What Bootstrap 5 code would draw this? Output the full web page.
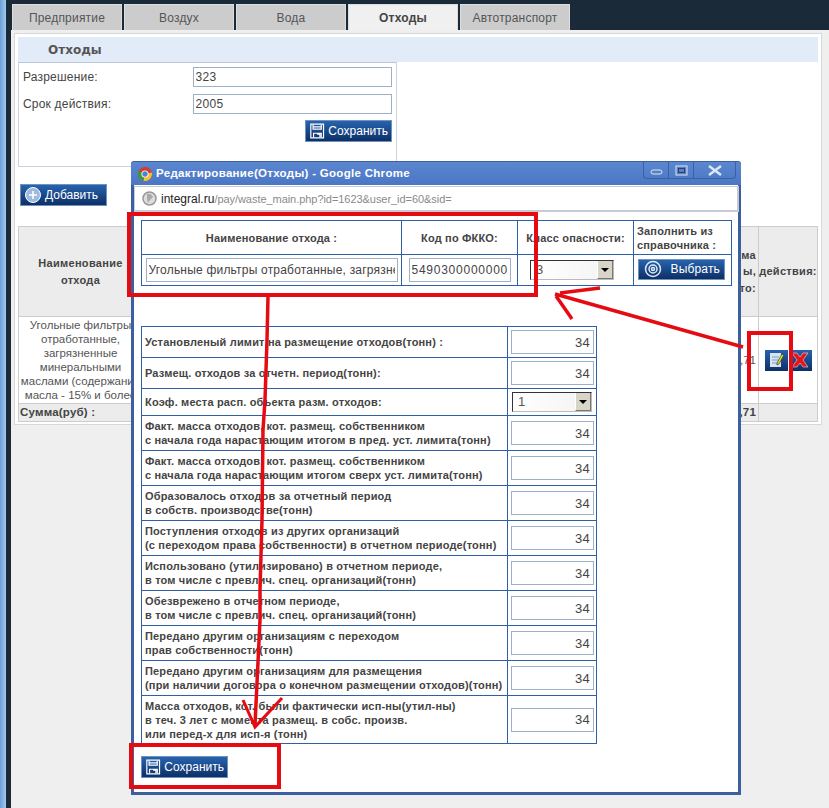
<!DOCTYPE html>
<html lang="ru"><head><meta charset="utf-8">
<title>Отходы</title>
<link href="https://cdn.jsdelivr.net/npm/bootstrap@5.3.0/dist/css/bootstrap.min.css" rel="stylesheet">
<style>
html,body{height:100%;}
body{margin:0;background:#efefef;font-family:"Liberation Sans",Arial,sans-serif;font-size:12px;color:#444;overflow:hidden;width:829px;height:808px;position:relative;}
.stripblue{width:6px;background:linear-gradient(90deg,#6a9fd8,#a5c9ee);flex:none;}
.stripdark{width:5px;background:#1a2a38;flex:none;}
.maincol{flex:1;min-width:0;}
.topbar{height:30px;background:#1a2a38;padding-top:4px;display:flex;gap:2px;margin-left:-5px;padding-left:6px;}
.tabx{height:26px;width:110px;background:#ccc;color:#555;display:flex;align-items:center;justify-content:center;font-size:12px;letter-spacing:.2px;border:1px solid #ddd;border-bottom:0;}
.tabx.on{background:#f0f0f0;font-weight:bold;color:#444;}
.panelx{margin:3px 7px 0 3px;background:#fff;border:1px solid #d8d8d8;height:392px;padding:3px;position:relative;}
.headx{height:25px;background:#e2ecf8;color:#555;font-weight:bold;padding:4px 0 0 30px;font-family:"DejaVu Sans",sans-serif;font-size:12px;}
.formbox{width:379px;height:105px;border:1px solid #ccd3de;border-top-color:#bcc6d6;padding:0 4px;}
.rowx{display:flex;align-items:center;height:27px;font-size:12px;}
.rowx label{width:170px;letter-spacing:.2px;}
.txt{border:1px solid #9db0c6;height:20px;padding:0 2px;font:12px "Liberation Sans",sans-serif;color:#444;width:200px;background:#fff;outline:0;letter-spacing:.3px;}
.txt.rt{text-align:right;padding-right:3px;font-size:13px;height:24px;width:83px;}
.bluebtn{display:inline-flex;align-items:center;background:linear-gradient(#2763ae,#0d2f66);color:#fff;border:1px solid #6f93bf;font-size:12px;height:22px;width:87px;padding:0 3px;gap:3px;border-radius:0;line-height:1;font-weight:normal;font-family:"Liberation Sans",sans-serif;}
.saveright{display:flex;justify-content:flex-end;margin-top:3px;}
.addwrap{margin:17px 0 0 2px;height:22px;}
.gridx{width:100%;margin-top:20px;border-collapse:collapse;table-layout:fixed;font-size:12px;}
.gridx td,.gridx th{border:1px solid #ccc;text-align:center;padding:0;}
.gridx th{background:#ececec;color:#444;font-size:11px;font-weight:bold;letter-spacing:.3px;}
.gridx tr.hd{height:90px;}
.gridx tr.bd{height:87px;line-height:14px;color:#555;font-size:11.5px;white-space:nowrap;}
.gridx tr.ft{height:17px;}
.gridx tr.ft td{background:#ececec;font-weight:bold;font-size:11.5px;text-align:left;letter-spacing:.2px;padding-left:1px;}
.gridx tr.ft td.text-end,.gridx th.text-end,.gridx td.text-end{text-align:right;padding-right:2px;}
.actbtns{display:inline-flex;gap:1px;vertical-align:middle;}
.sqb{width:23px;height:21px;background:linear-gradient(#2763ae,#0d2f66);display:flex;align-items:center;justify-content:center;}
.winx{position:absolute;left:131px;top:161px;width:610px;height:634px;background:#fff;border-style:solid;border-width:1px 3px 3px 3px;border-color:#3c5f9f;border-radius:3px 3px 0 0;}
.wintitle{height:23px;margin:0 -3px;background:linear-gradient(#5b86d0,#4a76c4);color:#fff;font-weight:bold;font-size:11.5px;letter-spacing:.3px;display:flex;align-items:center;padding-left:6px;gap:3px;position:relative;border-radius:3px 3px 0 0;}
.winctl{position:absolute;right:5px;top:0;height:17px;display:flex;border:1px solid #3c5f9f;border-top:0;border-radius:0 0 4px 4px;}
.winctl span{display:flex;align-items:center;justify-content:center;width:25px;height:17px;border-right:1px solid #3c5f9f;}
.winctl span:last-child{border-right:0;width:41px;}
.urlbar{height:26px;background:#fff;border:1px solid #c5cad3;border-right-width:2px;border-bottom-width:2px;margin:1px -1px 0 0;display:flex;align-items:center;padding-left:7px;gap:4px;font-size:12px;}
.urlbar i{font-style:normal;color:#8a8a8a;font-size:11px;letter-spacing:-.05px;}
.urlbar b{font-weight:normal;color:#222;}
.tblx{border-collapse:collapse;font-size:11px;color:#444;letter-spacing:.17px;}
.tblx td{border:1px solid #2f5fa5;padding:0 3px;line-height:14px;font-weight:bold;}
.tb1{position:absolute;left:7px;top:58px;width:590px;table-layout:fixed;}
.tb2{position:absolute;left:7px;top:164px;width:456px;table-layout:fixed;}
.tb2 td:first-child{white-space:nowrap;}
.tb1 td{text-align:center;}
.tb1 td.text-start{text-align:left;}
.tb1 td.selcell{text-align:left;padding-left:12px;}
.sel{display:inline-flex;align-items:stretch;border:1px solid #333;border-right-color:#bbb;border-bottom-color:#bbb;height:20px;width:84px;background:linear-gradient(90deg,#fff,#f3f3f3);font-weight:normal;font-size:13px;color:#555;vertical-align:middle;}
.sel em{flex:1;font-style:normal;text-align:left;padding-left:5px;line-height:18px;}
.sel u{width:16px;background:#d8d4c8;border-left:1px solid #fff;border-right:1px solid #777;border-bottom:1px solid #777;display:flex;align-items:center;justify-content:center;text-decoration:none;}
.arrowx{width:0;height:0;border:4px solid transparent;border-top:4px solid #000;border-bottom:0;}
.btnsave2{position:absolute;left:7px;top:594px;}
.anno{position:absolute;left:0;top:0;width:829px;height:808px;pointer-events:none;}
</style></head>
<body>
<div class="d-flex h-100">
  <div class="stripblue"></div><div class="stripdark"></div>
  <div class="maincol">
    <div class="topbar">
      <div class="tabx">Предприятие</div><div class="tabx">Воздух</div><div class="tabx">Вода</div><div class="tabx on">Отходы</div><div class="tabx">Автотранспорт</div>
    </div>
    <div class="panelx">
      <div class="headx">Отходы</div>
      <div class="formbox">
        <div class="rowx"><label>Разрешение:</label><input class="txt" value="323"></div>
        <div class="rowx"><label>Срок действия:</label><input class="txt" value="2005"></div>
        <div class="saveright"><span class="bluebtn"><svg width="18" height="18" viewBox="0 0 18 18" fill="none" stroke="#fff" stroke-width="1.3"><path d="M2 1.500h14v15H2z"/><path d="M4.500 2v5h9V2M5 4.500h8M5 16v-4.500h8.500V16M9 12.500h3V16"/></svg>Сохранить</span></div>
      </div>
      <div class="addwrap"><span class="bluebtn"><svg width="18" height="18" viewBox="0 0 18 18"><circle cx="9" cy="9" r="7.500" fill="#9dbbe0" stroke="#fff"/><path d="M9 5v8M5 9h8" stroke="#fff" stroke-width="1.600"/></svg>Добавить</span></div>
      <table class="gridx">
        <colgroup><col style="width:124px"><col><col style="width:80px"><col style="width:59px"></colgroup>
        <tr class="hd"><th>Наименование отхода</th><th></th><th class="text-end">ма<br>ы,<br>то:</th><th>действия:</th></tr>
        <tr class="bd"><td>Угольные фильтры<br>отработанные,<br>загрязненные<br>минеральными<br>маслами (содержание<br>масла - 15% и более</td><td></td><td class="text-end">9,71</td><td class="p-0"><span class="actbtns"><span class="sqb"><svg width="18" height="18" viewBox="0 0 18 18"><path d="M3 2h11v14H3z" fill="#d8e4f4"/><path d="M5 6h7M5 9h7M5 12h7" stroke="#7b9cc8"/><path d="M10 12l5-9 2 1-5 9-2 1z" fill="#d6e21e" stroke="#222" stroke-width=".6"/></svg></span><span class="sqb"><svg width="20" height="18" viewBox="0 0 20 18"><path d="M2 2h5l3 4 3-4h5l-5 7 5 7h-5l-3-4-3 4H2l5-7z" fill="#e8141c" stroke="#fff" stroke-width=".5"/></svg></span></span></td></tr>
        <tr class="ft"><td>Сумма(руб) :</td><td></td><td class="text-end">9,71</td><td></td></tr>
      </table>
    </div>
  </div>
</div>

<div class="winx">
  <div class="wintitle">
    <svg width="16" height="16" viewBox="0 0 16 16"><circle cx="8" cy="8" r="7" fill="#d8392b"/><path d="M8 8L1.500 5a7 7 0 0 0 5 9.800z" fill="#3a9a3c"/><path d="M8 8l6.800-1.500A7 7 0 0 1 6.500 14.800z" fill="#f2c230"/><circle cx="8" cy="8" r="3.600" fill="#fff"/><circle cx="8" cy="8" r="2.700" fill="#4a86d8"/></svg>
    Редактирование(Отходы) - Google Chrome
    <div class="winctl">
      <span><svg width="13" height="8" viewBox="0 0 13 8"><rect x="1" y="3" width="11" height="4" rx="2" fill="#5a80c4" stroke="#dde6f4"/></svg></span>
      <span><svg width="13" height="11" viewBox="0 0 13 11"><rect x="1" y="1" width="11" height="9" fill="#5a80c4" stroke="#dde6f4"/><rect x="3.500" y="3.500" width="6" height="4" fill="none" stroke="#26406f"/></svg></span>
      <span><svg width="16" height="11" viewBox="0 0 16 11"><path d="M2 1l12 9M14 1L2 10" stroke="#dde6f4" stroke-width="2.400"/></svg></span>
    </div>
  </div>
  <div class="urlbar">
    <svg width="15" height="15" viewBox="0 0 15 15"><circle cx="7.500" cy="7.500" r="6.500" fill="#ddd" stroke="#999" stroke-width="1.500"/><path d="M5 3c3-1 5 1 6 3l-3 3-2 3-1-4z" fill="#aaa"/></svg>
    <span><b>integral.ru</b><i>/pay/waste_main.php?id=1623&amp;user_id=60&amp;sid=</i></span>
  </div>
  <table class="tblx tb1">
    <colgroup><col style="width:260px"><col style="width:116px"><col style="width:116px"><col style="width:98px"></colgroup>
    <tr style="height:34px"><td>Наименование отхода :</td><td>Код по ФККО:</td><td class="p-0">Класс опасности:</td><td class="text-start">Заполнить из справочника :</td></tr>
    <tr style="height:31px">
      <td><input class="txt" style="width:252px;height:24px;letter-spacing:.2px" value="Угольные фильтры отработанные, загрязненные минеральными"></td>
      <td><input class="txt" style="width:102px;height:24px;letter-spacing:.75px" value="5490300000000"></td>
      <td class="selcell"><span class="sel"><em>3</em><u><span class="arrowx"></span></u></span></td>
      <td class="text-start ps-1"><span class="bluebtn" style="height:21px"><svg width="22" height="18" viewBox="0 0 22 18" fill="none" stroke="#dfe9f6" stroke-width="1.500"><circle cx="11" cy="9" r="7.500"/><circle cx="11" cy="9" r="4"/><circle cx="11" cy="9" r="1.500"/></svg>&nbsp;Выбрать</span></td>
    </tr>
  </table>
  <table class="tblx tb2">
    <colgroup><col style="width:366px"><col style="width:89px"></colgroup>
    <tr style="height:31px"><td>Установленый лимит на размещение отходов(тонн) :</td><td><input class="txt rt" value="34"></td></tr>
    <tr style="height:31px"><td>Размещ. отходов за отчетн. период(тонн):</td><td><input class="txt rt" value="34"></td></tr>
    <tr style="height:27px"><td>Коэф. места расп. объекта разм. отходов:</td><td class="px-1"><span class="sel" style="width:80px"><em>1</em><u><span class="arrowx"></span></u></span></td></tr>
    <tr style="height:35px"><td>Факт. масса отходов, кот. размещ. собственником<br>с начала года нарастающим итогом в пред. уст. лимита(тонн)</td><td><input class="txt rt" value="34"></td></tr>
    <tr style="height:35px"><td>Факт. масса отходов, кот. размещ. собственником<br>с начала года нарастающим итогом сверх уст. лимита(тонн)</td><td><input class="txt rt" value="34"></td></tr>
    <tr style="height:35px"><td>Образовалось отходов за отчетный период<br>в собств. производстве(тонн)</td><td><input class="txt rt" value="34"></td></tr>
    <tr style="height:35px"><td>Поступления отходов из других организаций<br>(с переходом права собственности) в отчетном периоде(тонн)</td><td><input class="txt rt" value="34"></td></tr>
    <tr style="height:35px"><td>Использовано (утилизировано) в отчетном периоде,<br>в том числе с превлич. спец. организаций(тонн)</td><td><input class="txt rt" value="34"></td></tr>
    <tr style="height:35px"><td>Обезврежено в отчетном периоде,<br>в том числе с превлич. спец. организаций(тонн)</td><td><input class="txt rt" value="34"></td></tr>
    <tr style="height:35px"><td>Передано другим организациям с переходом<br>прав собственности(тонн)</td><td><input class="txt rt" value="34"></td></tr>
    <tr style="height:35px"><td>Передано другим организациям для размещения<br>(при наличии договора о конечном размещении отходов)(тонн)</td><td><input class="txt rt" value="34"></td></tr>
    <tr style="height:48px"><td>Масса отходов, кот. были фактически исп-ны(утил-ны)<br>в теч. 3 лет с момента размещ. в собс. произв.<br>или перед-х для исп-я (тонн)</td><td><input class="txt rt" value="34"></td></tr>
  </table>
  <span class="bluebtn btnsave2"><svg width="18" height="18" viewBox="0 0 18 18" fill="none" stroke="#fff" stroke-width="1.3"><path d="M2 1.500h14v15H2z"/><path d="M4.500 2v5h9V2M5 4.500h8M5 16v-4.500h8.500V16M9 12.500h3V16"/></svg>Сохранить</span>
</div>

<svg class="anno" viewBox="0 0 829 808" fill="none" stroke="#e60b12" stroke-width="4">
  <rect x="129" y="214" width="407" height="81"/>
  <rect x="749" y="333" width="42" height="56"/>
  <rect x="131" y="745" width="148" height="42"/>
  <path d="M268 296L267 340 265 400 263 430 262 520 260 590 260 620 255 725" stroke-width="3.500"/>
  <path d="M243 700L255 727 282 698" stroke-width="3"/>
  <path d="M743 347L555 294" stroke-width="3.500"/>
  <path d="M600 288L560 293M572 319L556 296" stroke-width="3.500"/>
</svg>
</body></html>
